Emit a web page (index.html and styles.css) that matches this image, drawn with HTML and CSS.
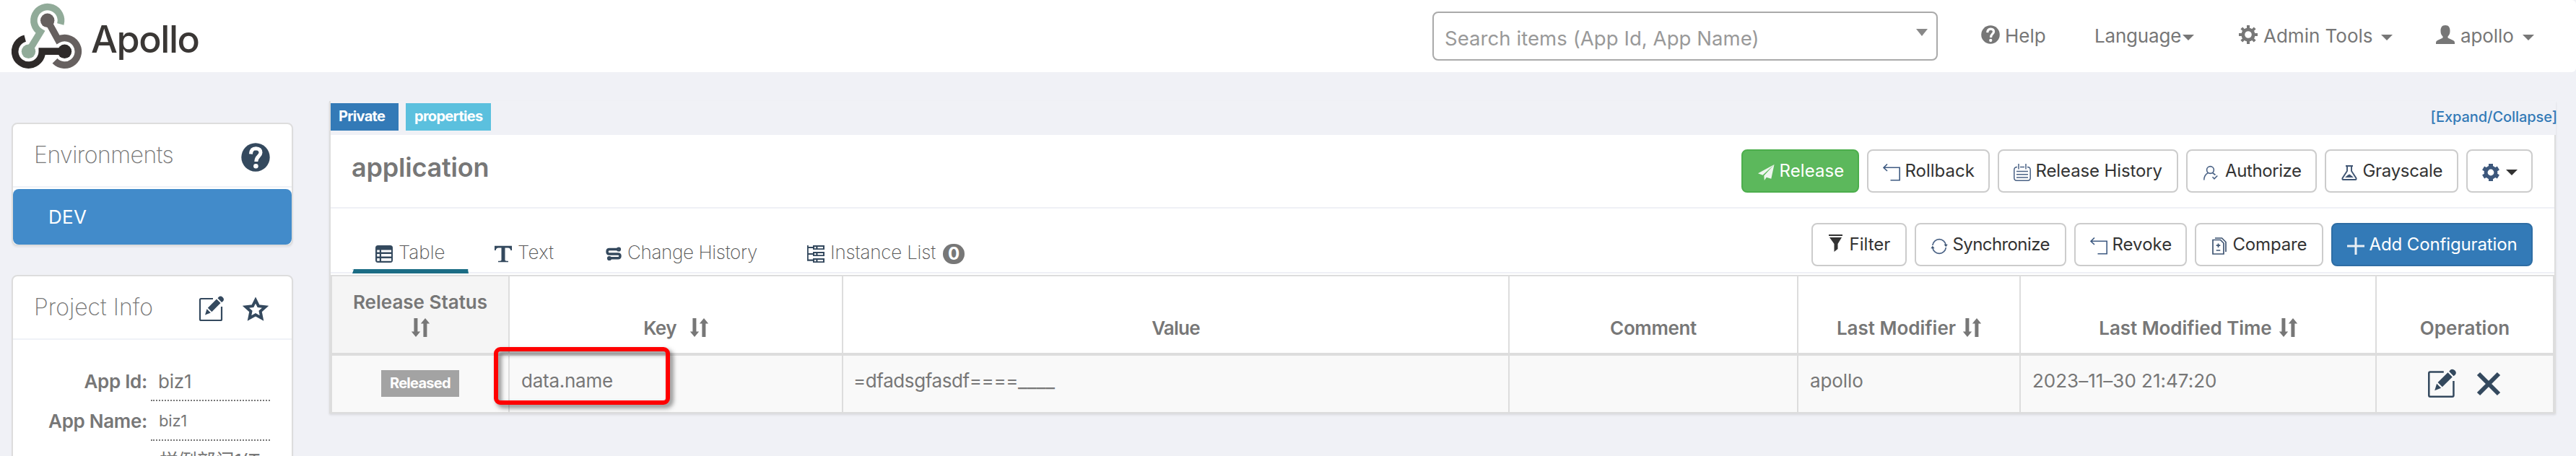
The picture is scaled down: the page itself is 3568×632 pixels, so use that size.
FILE: index.html
```html
<!DOCTYPE html>
<html lang="en">
<head>
<meta charset="utf-8">
<title>Apollo</title>
<link rel="stylesheet" href="styles.css">
</head>
<body>
<svg class="defs" aria-hidden="true">
  <symbol id="sort" viewBox="0 0 25 26"><path d="M3.4 0h5v18.6h3.8L6 26-.2 18.6h3.6zM16.4 26h5V7.4h3.8L19 0l-6.2 7.4h3.6z"/></symbol>
  <symbol id="edit" viewBox="0 0 36 36">
    <path d="M20 4H3.5Q2 4 2 5.500V32.500Q2 34 3.500 34H30.500Q32 34 32 32.500V15" fill="none" stroke="#34495e" stroke-width="2.200"/>
    <path d="M12.800 16.700 25 4.500 30.500 10 18.300 22.200zM11.500 18.200 16.800 23.500 9 26.500zM26.500 3.200 28 1.600Q30.500-.6 33.500 2 36.200 5 34 7.400L32 9z"/>
  </symbol>
  <symbol id="back" viewBox="0 0 24 24"><path d="M6 .5 1 5.300 6 10M1.500 5.300H23.200V22.800H10.500" fill="none" stroke="#3f5b82" stroke-width="1.600"/></symbol>
  <symbol id="caret" viewBox="0 0 16 8"><path d="M0 0h16L8 8z"/></symbol>
  <symbol id="question" viewBox="0 0 40 40">
    <circle cx="20" cy="20" r="19.700"/>
    <path d="M13.400 15.500Q13.800 7.700 20.500 7.700 27 8 27 13.500C27 18.500 20.800 18.500 20.800 26" fill="none" stroke="#fff" stroke-width="5"/>
    <circle cx="20.400" cy="32.300" r="3.300" fill="#fff"/>
  </symbol>
</svg>

<header class="topbar">
  <a class="brand">
    <svg class="brand-mark" viewBox="16 0 98 98" fill="none" stroke-width="9.600">
      <g stroke="#91ab99"><path d="M39.500 70.300 55.900 43.400A18.800 18.800 0 1 1 83.800 32.500"/><circle cx="39.500" cy="70.300" r="9.700" fill="#91ab99" stroke="none"/></g>
      <g stroke="#66605f"><path d="M65.700 27.300 80.400 53.900A18.800 18.800 0 1 1 76 83.400"/><circle cx="65.700" cy="27.300" r="9.700" fill="#66605f" stroke="none"/></g>
      <g stroke="#2e2a29"><path d="M89.500 70.100H58.300A18.800 18.800 0 1 1 34.700 52.100"/><circle cx="89.500" cy="70.300" r="9.700" fill="#2e2a29" stroke="none"/></g>
    </svg>
    <span class="brand-name">Apollo</span>
  </a>
  <div class="search"><span>Search items (App Id, App Name)</span><svg class="search-arrow" viewBox="0 0 16 10"><path d="M0 0h16L8 10z"/></svg></div>
  <nav class="nav">
    <a class="nav-help"><svg class="nav-icon" viewBox="0 0 40 40"><use href="#question"/></svg><span>Help</span></a>
    <a class="nav-lang"><span>Language</span><svg class="caret"><use href="#caret"/></svg></a>
    <a class="nav-admin"><svg class="nav-icon" viewBox="0 0 26 26"><circle cx="13" cy="13" r="7.200" fill="none" stroke="#777" stroke-width="4.800"/><g stroke="#777" stroke-width="4"><path d="M13 0v5M13 21v5M0 13h5M21 13h5M3.800 3.800l3.500 3.500M18.700 18.700l3.500 3.500M22.200 3.800l-3.500 3.500M7.300 18.700l-3.500 3.500"/></g></svg><span>Admin Tools</span><svg class="caret"><use href="#caret"/></svg></a>
    <a class="nav-user"><svg class="nav-icon" viewBox="0 0 26 26"><path d="M13 0c5 0 6.500 3.500 6.500 8 0 4-1.500 6-3 7.600v2L24 21q2 1.200 2 3v2H0v-2q0-1.800 2-3l7.500-3.400v-2C8 14 6.500 12 6.500 8 6.500 3.500 8 0 13 0z"/></svg><span>apollo</span><svg class="caret"><use href="#caret"/></svg></a>
  </nav>
</header>

<main class="page">
  <aside class="sidebar">
    <section class="panel">
      <div class="panel-head"><h2 class="env-title">Environments</h2><svg class="icon-help"><use href="#question"/></svg></div>
      <a class="env-item">DEV</a>
    </section>
    <section class="panel">
      <div class="panel-head"><h2>Project Info</h2>
        <span class="panel-tools">
          <svg class="icon-edit"><use href="#edit"/></svg>
          <svg class="icon-star" viewBox="0 0 36 34"><path d="M18 5 22 13.200 31.500 14.300 24.600 20.500 26.500 30 18 25.300 9.500 30 11.400 20.500 4.500 14.300 14 13.200z" fill="none" stroke="#34495e" stroke-width="4"/></svg>
        </span>
      </div>
      <div class="info">
        <div class="info-row"><span class="info-label id-label">App Id:</span><span class="info-value">biz1</span></div>
        <div class="info-row"><span class="info-label">App Name:</span><span class="info-value small">biz1</span></div>
        <div class="info-row"><span class="info-label"></span><span class="info-value dept">样例部门1(T</span></div>
      </div>
    </section>
  </aside>

  <section class="namespace">
    <div class="ns-labels">
      <span class="label label-private">Private</span><span class="label label-format">properties</span>
      <a class="toggle">[Expand/Collapse]</a>
    </div>
    <div class="ns-head">
      <h1>application</h1>
      <div class="actions">
        <button class="btn btn-release"><svg viewBox="0 0 24 24" fill="#eef5ee"><path d="M23.500 1 1 13.200l6.500 2.600zM23.500 1 9.300 16.500l.5 6.500 3-4.300 6.500 2z"/></svg><span>Release</span></button>
        <button class="btn btn-rollback"><svg><use href="#back"/></svg><span>Rollback</span></button>
        <button class="btn btn-history"><svg viewBox="0 0 24 24" fill="none" stroke="#4a6285" stroke-width="1.500"><path d="M5 4.500Q.8 4.500.8 8.500V19.500Q.8 23.200 4.500 23.200H19.500Q23.200 23.200 23.200 19.500V8.500Q23.200 4.500 19 4.500M9 4.500H15M7 0V7.500M17 0V7.500M4 10.500H20M4 14.800H20M4 19H20"/></svg><span>Release History</span></button>
        <button class="btn btn-authorize"><svg viewBox="0 0 24 24" fill="none" stroke="#4a6285" stroke-width="1.600"><circle cx="11.500" cy="8.500" r="4.900"/><path d="M2.800 22.500Q2.800 15.500 8.500 12.500M14.500 12.500 18.500 15.500M14.500 18.300 17 20.800 21.300 16.500"/></svg><span>Authorize</span></button>
        <button class="btn btn-gray"><svg viewBox="0 0 24 24" fill="none" stroke="#3f5573" stroke-width="1.900"><path d="M7 3H17M9 3V10L2.500 20Q2 22 3.500 22H20.500Q22 22 21.500 20L15 10V3"/><path d="M6 19 10 15.500 12.500 14.500 15 16.500 18 19z" fill="#3f5573" stroke="none"/></svg><span>Grayscale</span></button>
        <button class="btn btn-gear"><svg viewBox="0 0 24 24"><g stroke="#3d587c" fill="none"><circle cx="12" cy="12" r="6.900" stroke-width="5"/><path d="M12 0V4.500M12 19.500V24M1.600 6 5.500 8.300M18.500 15.700 22.400 18M1.600 18 5.500 15.700M18.500 8.300 22.400 6" stroke-width="6"/></g></svg><svg class="caret dark"><use href="#caret"/></svg></button>
      </div>
    </div>
    <div class="ns-tabs">
      <div class="tabs">
        <a class="tab tab-table active"><svg viewBox="0 0 24 24"><rect width="24" height="24" rx="3.500"/><g fill="#fff"><path d="M2.200 6.500h3.600v3H2.200zM8 6.500h14v3H8zM2.200 12h3.600v3.500H2.200zM8 12h14v3.500H8zM2.200 18h3.600v3.800H2.200zM8 18h14v3.800H8z"/></g></svg><span>Table</span></a>
        <a class="tab tab-text"><svg viewBox="0 0 24 24"><path d="M0 .8H24V7H22.300Q22 3.500 18.500 3.500H14.500V20.500Q14.500 21.800 19 21.800V23.300H5V21.800Q9.500 21.800 9.500 20.500V3.500H5.500Q2 3.500 1.700 7H0z"/></svg><span>Text</span></a>
        <a class="tab tab-change"><svg viewBox="0 0 24 24" fill="none" stroke="#34495e" stroke-width="3.400"><path d="M19 5.500H7Q4 5.500 4 8.700 4 12 7 12H19Q22 12 22 14.800 22 17.800 19 17.800H7"/><circle cx="20" cy="5.500" r="1.400"/><circle cx="7" cy="18" r="1.400"/></svg><span>Change History</span></a>
        <a class="tab tab-instance"><svg viewBox="0 0 24 24"><path d="M0 0h1.800v2H8V0h16v6H8V3.900H1.800V11H8V9h16v6H8v-2H1.800v6.500H8V18h16v6H8v-2.300H0z"/><g fill="#fff"><path d="M10 2h2.300v2.200H10zM14.500 2H22v2.200h-7.500zM10 11h2.300v2.200H10zM14.500 11H22v2.200h-7.500zM10 20h2.300v2.200H10zM14.500 20H22v2.200h-7.500z"/></g></svg><span>Instance List</span><b class="badge">0</b></a>
      </div>
      <div class="actions">
        <button class="btn btn-filter"><svg viewBox="0 0 24 24"><path d="M2 0h19v2H2zM3 4h17l-5.500 9v7L9.500 24V13z" fill="#333"/></svg><span>Filter</span></button>
        <button class="btn btn-sync"><svg viewBox="0 0 24 24" fill="none" stroke="#4a6285" stroke-width="1.700"><path d="M2.800 11A9.300 9.300 0 0 1 21.300 11M21.300 14A9.300 9.300 0 0 1 2.800 14"/><path d="M18.500 9.800h5.300l-2.500 3.400zM.3 15.200h5.300L2.800 11.800z" fill="#3f5573" stroke="none"/></svg><span>Synchronize</span></button>
        <button class="btn btn-revoke"><svg><use href="#back"/></svg><span>Revoke</span></button>
        <button class="btn btn-compare"><svg viewBox="0 0 24 24" fill="none" stroke="#3f5573" stroke-width="1.700"><path d="M3 3.500H13.500L18 8V23H3zM6 1H15.500L21 6.500V20M10.500 8.500V14M7.700 11.200H13.300M7.700 18H13.300"/></svg><span>Compare</span></button>
        <button class="btn btn-add"><svg viewBox="0 0 24 24"><path d="M12 0V24M0 12H24" stroke="#e8eef4" stroke-width="3"/></svg><span>Add Configuration</span></button>
      </div>
    </div>
    <table class="items">
      <colgroup><col class="c-status"><col class="c-key"><col class="c-value"><col class="c-comment"><col class="c-modifier"><col class="c-time"><col class="c-op"></colgroup>
      <thead><tr>
        <th class="sorted">Release Status<br><svg class="sort"><use href="#sort"/></svg></th>
        <th><span class="t-key">Key</span><svg class="sort sort-wide"><use href="#sort"/></svg></th>
        <th><span class="t-value">Value</span></th>
        <th><span class="t-comment">Comment</span></th>
        <th><span>Last Modifier</span><svg class="sort sort-gap"><use href="#sort"/></svg></th>
        <th><span class="t-time">Last Modified Time</span><svg class="sort sort-gap"><use href="#sort"/></svg></th>
        <th>Operation</th>
      </tr></thead>
      <tbody><tr>
        <td class="status"><span class="released">Released</span></td>
        <td class="key-cell"><span class="t-name">data.name</span><i class="highlight"></i></td>
        <td><span class="t-data">=dfadsgfasdf====</span><span class="t-under">____</span></td>
        <td></td>
        <td><span class="t-user">apollo</span></td>
        <td>2023–11–30 21:47:20</td>
        <td class="ops"><div class="op-icons"><svg class="op-edit"><use href="#edit"/></svg><svg class="op-del" viewBox="0 0 34 34"><path d="M3 3 31 31M31 3 3 31" stroke="#34495e" stroke-width="6"/></svg></div></td>
      </tr></tbody>
    </table>
  </section>
</main>
</body>
</html>
```

FILE: styles.css
```css
* { box-sizing: border-box; }
body { margin: 0; background: #f0f1f6; color: #777; fill: currentColor; font: 400 26px/36px Inter, "Noto Sans CJK SC", sans-serif; font-variant-ligatures: none; }
h1, h2 { margin: 0; }
svg { display: block; flex: none; }
span { white-space: nowrap; }
.defs { display: none; }

/* Top bar */
.topbar { display: flex; align-items: center; height: 100px; padding: 0 58px 0 16px; background: #fff; border-radius: 0 6px 6px 0; }
.brand { display: flex; align-items: center; margin-right: auto; }
.brand-mark { width: 98px; height: 98px; }
.brand-name { margin-left: 12px; padding-top: 10px; font-size: 52px; line-height: 60px; font-weight: 500; letter-spacing: -1.4px; color: #3a3735; }
.search { display: flex; justify-content: space-between; width: 700px; height: 68px; margin-right: 60px; padding: 4px 12px 0 15px; border: 2px solid #aaa; border-radius: 8px; font-size: 27.5px; letter-spacing: .07px; line-height: 63px; color: #999; }
.search-arrow { width: 16px; height: 10px; margin-top: 18px; color: #888; }
.nav { display: flex; gap: 60px; }
.nav a { display: flex; align-items: center; height: 36px; }
.nav-icon { width: 26px; height: 26px; margin-top: -4px; }
.caret { width: 16px; height: 8px; margin: 4px 0 0 auto; }
.nav-help { width: 99px; gap: 7px; }
.nav-lang { width: 138px; margin-left: -2px; letter-spacing: -.2px; }
.nav-lang + .nav-admin { margin-left: 2px; }
.nav-admin { width: 213px; gap: 8px; }
.nav-user { width: 136px; gap: 8px; letter-spacing: -.1px; }

/* Page frame */
.page { display: flex; align-items: flex-start; gap: 50px; height: 532px; padding: 40px 28px 0 16px; overflow: hidden; }
.sidebar { display: flex; flex-direction: column; gap: 40px; width: 390px; padding-top: 30px; }
.panel { border: 2px solid #ddd; border-radius: 8px; background: #fff; box-shadow: 0 2px 2px rgba(0, 0, 0, .05); }
.panel-head { display: flex; justify-content: space-between; align-items: center; height: 88px; padding: 0 30px 0 29px; border-bottom: 2px solid #eff2f7; color: #34495e; }
.panel-head h2 { font-size: 32px; line-height: 40px; font-weight: 200; color: #777; }
.panel-head .env-title { letter-spacing: -.5px; }
.icon-help { width: 40px; height: 40px; margin-top: 6px; }
.panel-tools { display: flex; align-items: center; gap: 25px; padding-right: 2px; }
.icon-edit { width: 36px; height: 36px; margin-top: 4px; }
.icon-star { width: 36px; height: 34px; margin-top: 4px; }
.env-item { display: block; height: 77px; margin-top: 2px; padding-left: 49px; border-radius: 8px; background: #428bca; color: #fff; line-height: 77px; letter-spacing: .3px; }
.info { padding-top: 30px; }
.info-row { display: flex; gap: 5px; height: 55px; line-height: 55px; }
.info-label { width: 186px; text-align: right; font-weight: 600; letter-spacing: -.3px; }
.info-value { width: 165px; height: 55px; padding-left: 10px; overflow: hidden; border-bottom: 2px dotted #777; letter-spacing: -.2px; }
.info-value.small { padding-left: 11px; font-size: 22px; }
.info-value.dept { padding-left: 12px; border: 0; }

/* Namespace */
.namespace { flex: 1; border: solid #ddd; border-width: 0 2px; box-shadow: 0 2px 3px rgba(0, 0, 0, .1); }
.ns-labels { display: flex; align-items: flex-start; height: 47px; margin-right: -2px; padding-top: 3px; background: #f0f1f6; }
.label { height: 38px; color: #fff; font-weight: 700; font-size: 20px; line-height: 37px; letter-spacing: -.7px; }
.label-private { width: 94px; padding-left: 11px; background: #337ab7; }
.label-format { width: 118px; margin-left: 10px; padding-left: 12px; background: #5bc0de; }
.toggle { margin: 0 -2px 0 auto; font-size: 20px; font-weight: 500; line-height: 38px; letter-spacing: -.07px; color: #337ab7; }
.ns-head { display: flex; justify-content: space-between; height: 102px; padding: 20px 30px 0 29px; border-bottom: 2px solid #eff0f6; background: #fff; }
.ns-head h1 { font-size: 36px; line-height: 50px; font-weight: 600; letter-spacing: -.2px; }
.actions { display: flex; gap: 11px; }
.btn { display: flex; align-items: center; gap: 6.500px; height: 60px; padding: 0 0 0 20px; border: 2px solid #ccc; border-radius: 8px; background: #fff; color: #333; font: 400 24px/36px Inter, sans-serif; font-variant-ligatures: none; }
.btn svg { width: 24px; height: 24px; margin-top: 4px; }
.btn .caret { width: 16px; height: 8px; margin: 4px 0 0 2px; }
.btn-release { width: 163px; background: #5cb85c; border-color: #4cae4c; color: #fff; letter-spacing: .1px; }
.btn-rollback { width: 170px; }
.btn-history { width: 250px; letter-spacing: -.12px; }
.btn-authorize { width: 181px; letter-spacing: -.4px; gap: 8px; }
.btn-gray { width: 185px; letter-spacing: -.3px; }
.btn-gear { width: 92px; }
.btn-filter { width: 132px; }
.btn-filter svg { margin-top: -4px; }
.btn-sync { width: 210px; letter-spacing: -.59px; }
.btn-revoke { width: 156px; }
.btn-compare { width: 178px; letter-spacing: -.16px; }
.btn-add { width: 279px; background: #337ab7; border-color: #2e6da4; color: #fff; letter-spacing: -.12px; }
.ns-tabs { display: flex; justify-content: space-between; height: 92px; padding: 20px 30px 0; border-bottom: 2px solid #fff; background: linear-gradient(#eff0f6, #eff0f6) bottom / 100% 2px no-repeat #fff; }
.tabs { display: flex; gap: 4px; padding-top: 12px; }
.tab { display: flex; align-items: center; gap: 8px; height: 58px; padding-left: 32px; color: #34495e; font-weight: 200; }
.tab svg { width: 24px; height: 24px; margin-top: 4px; }
.tab span { color: #555; }
.tab.active { background: linear-gradient(#1b6d85, #1b6d85) bottom / 100% 6px no-repeat; clip-path: polygon(0 0, 100% 0, 100% 90%, 160px 90%, 100% 100%, 0 100%, 2px 90%, 0 90%); }
.tab-table { width: 161px; }
.tab-text { width: 148px; letter-spacing: .25px; }
.tab-change { width: 277px; letter-spacing: -.35px; }
.tab-instance { letter-spacing: -.2px; }
.badge { width: 30px; height: 28px; margin: 4px 0 0 2px; border-radius: 14px; background: #777; color: #fff; font-size: 24px; line-height: 28px; font-weight: 700; text-align: center; }

/* Items table */
.items { width: 3080px; table-layout: fixed; border-spacing: 0; border: solid #ddd; border-width: 2px 0 0 2px; background: #fff; }
.c-status { width: 246px; }
.c-key { width: 462px; }
.c-value { width: 923px; }
.c-comment { width: 400px; }
.c-modifier { width: 308px; }
.c-time { width: 493px; }
.c-op { width: 246px; }
th { height: 110px; padding: 0 0 16px; border: solid #ddd; border-width: 0 2px 4px 0; font-weight: 600; vertical-align: bottom; }
th.sorted { background: #f5f5f5; }
td { height: 80px; padding: 16px 0 0 16px; border: solid #ddd; border-width: 0 2px 2px 0; background: #f9f9f9; line-height: 37px; vertical-align: top; }
.sort { display: inline-block; width: 25px; height: 26px; vertical-align: -3px; }
.sort-wide { margin-left: 19px; }
.sort-gap { margin-left: 10px; }
.t-key { letter-spacing: -.57px; }
.t-value { letter-spacing: -.77px; }
.t-comment { letter-spacing: -.35px; }
.t-time { letter-spacing: -.06px; }
.t-name { letter-spacing: -.25px; }
.t-data { margin-left: -2px; letter-spacing: -.4px; }
.t-under { font-size: 28px; line-height: 30px; }
.t-user { letter-spacing: -.1px; }
td.status { padding: 20px 0 0 68px; }
.released { display: block; width: 108px; height: 37px; padding-left: 12px; background: #a3a3a3; color: #fff; font-size: 20px; font-weight: 700; line-height: 36px; letter-spacing: -.72px; }
.key-cell { position: relative; }
.highlight { position: absolute; left: -22px; top: -12px; width: 244px; height: 80px; border: 6px solid #f00; border-radius: 9px; filter: drop-shadow(4px 4px 3px rgba(0, 0, 0, .5)); }
td.ops { padding: 18px 0 0 70px; }
.op-icons { display: flex; align-items: center; gap: 27px; color: #34495e; }
.op-edit { width: 41px; height: 41px; }
.op-del { width: 34px; height: 34px; }
```
